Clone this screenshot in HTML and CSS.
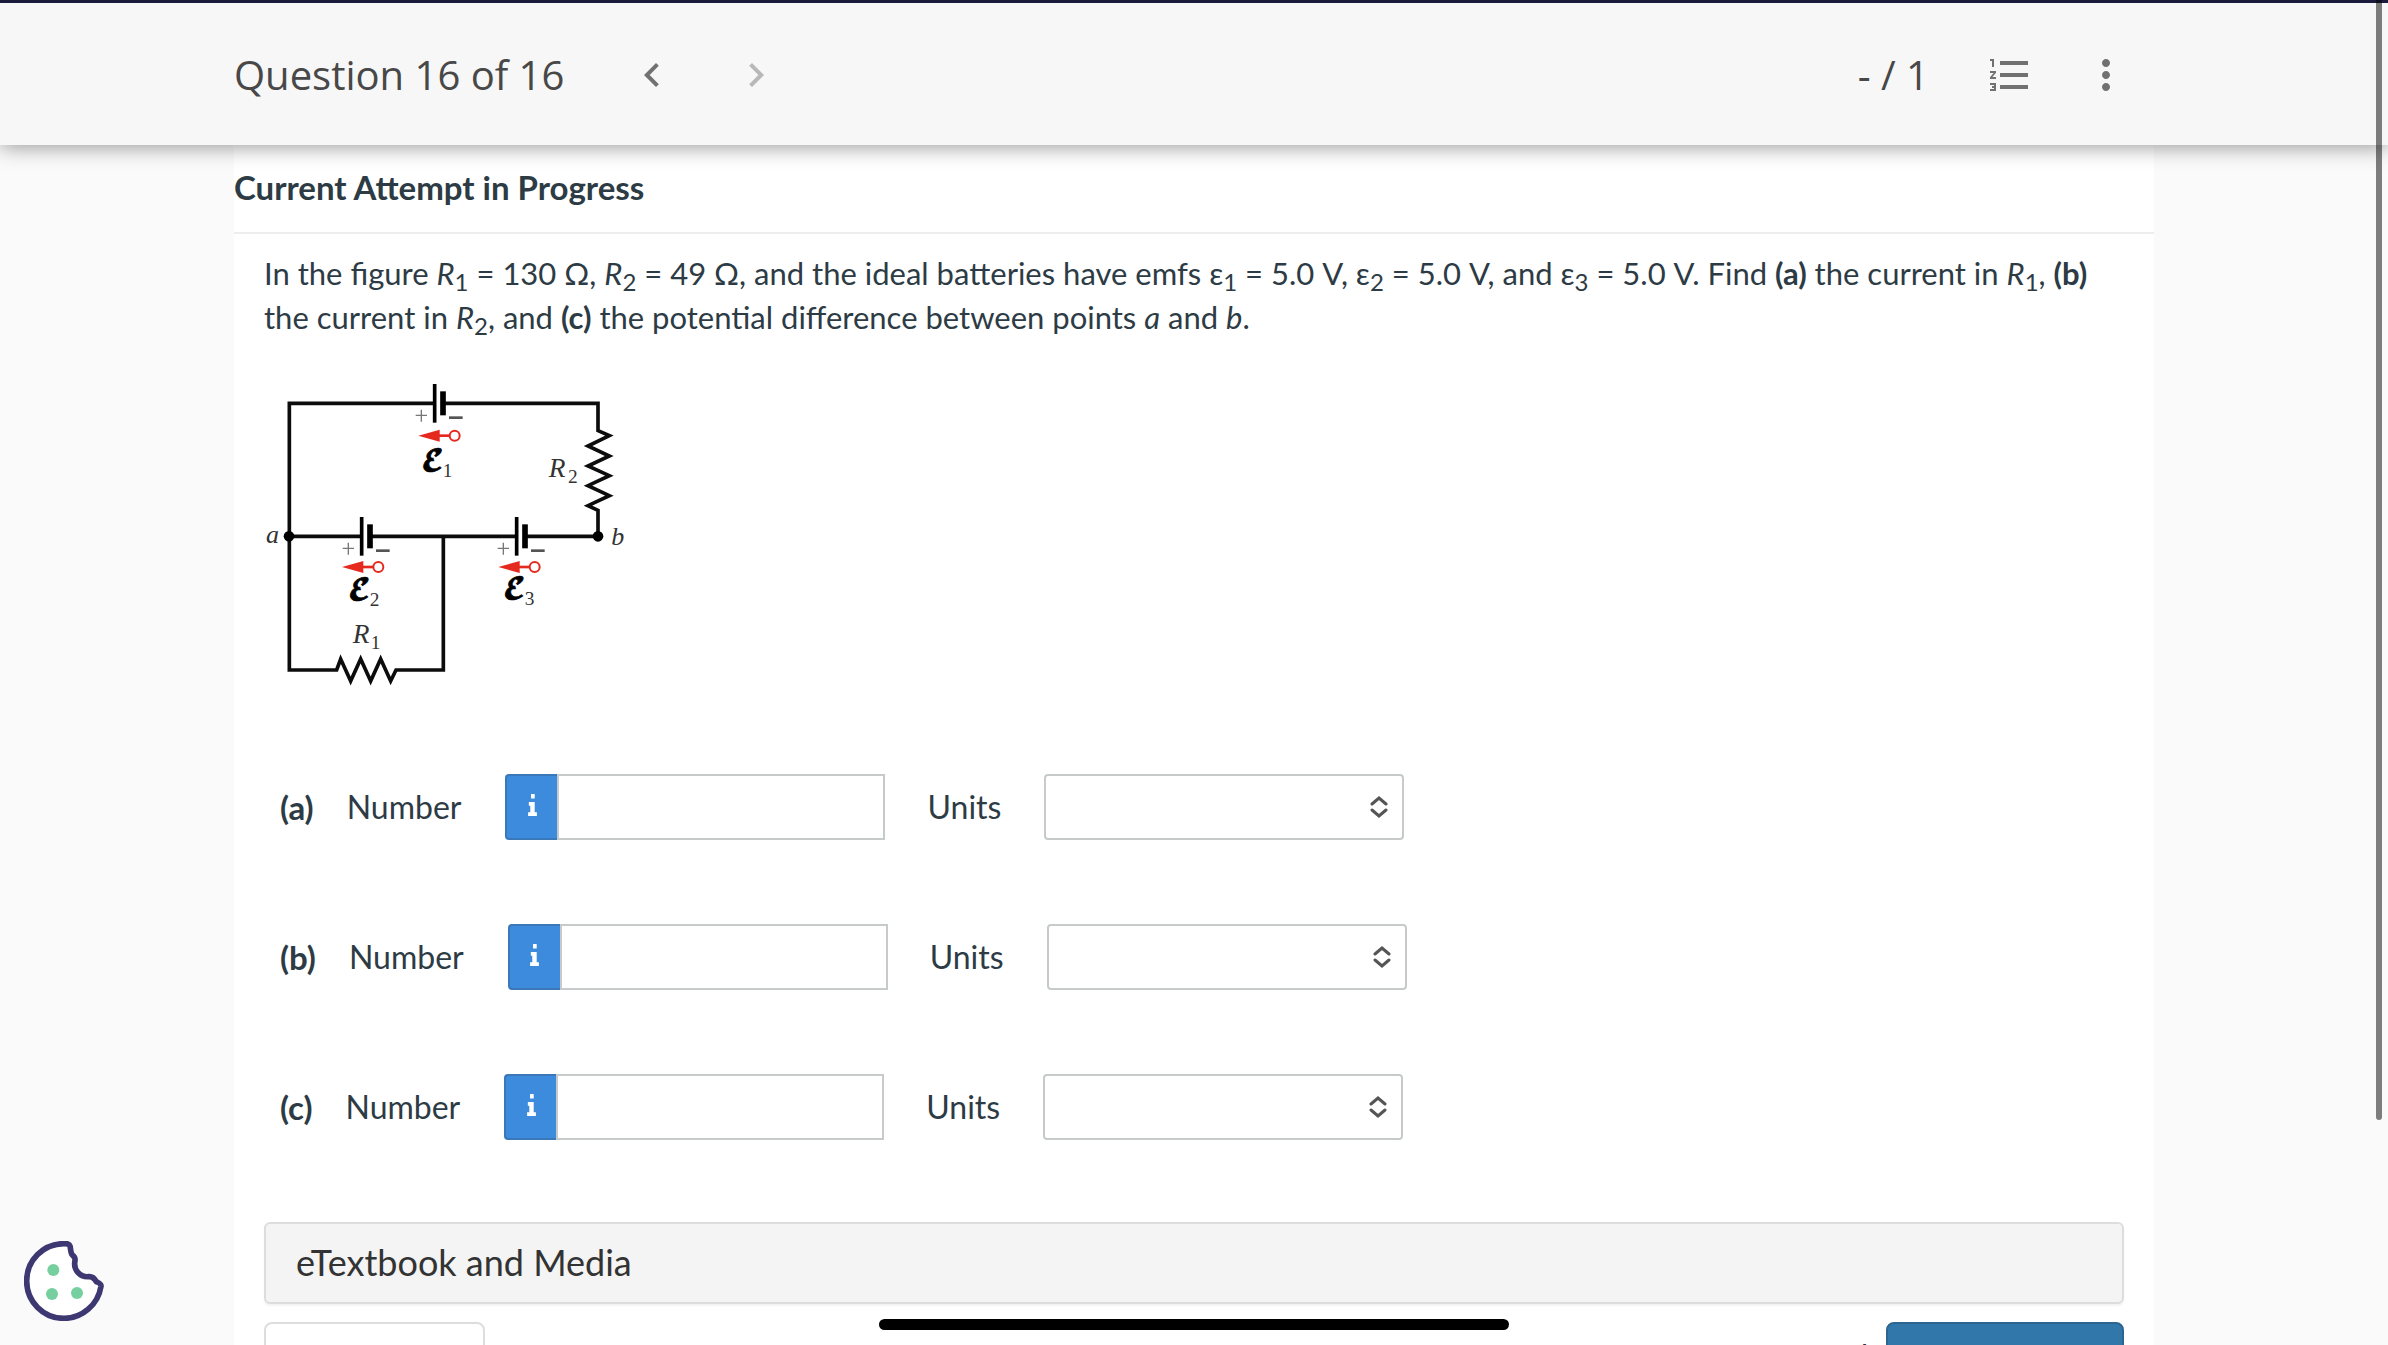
FILE: index.html
```html
<!DOCTYPE html>
<html lang="en">
<head>
<meta charset="utf-8">
<meta name="viewport" content="width=device-width, initial-scale=1">
<title>Question 16 of 16</title>
<link rel="stylesheet" href="styles.css">
</head>
<body>
<div class="app">
  <header class="topbar">
    <div class="topbar-inner">
      <h1 class="topbar-title">Question 16 of 16</h1>
      <nav class="pager">
        <button class="icon-button" type="button" aria-label="Previous question">
          <svg viewBox="0 0 24 24"><path d="M15.41 7.41 14 6l-6 6 6 6 1.41-1.41L10.83 12z"/></svg>
        </button>
        <button class="icon-button" type="button" aria-label="Next question" disabled>
          <svg viewBox="0 0 24 24"><path d="M10 6 8.59 7.41 13.17 12l-4.58 4.59L10 18l6-6z"/></svg>
        </button>
      </nav>
      <div class="score">- / 1</div>
      <div class="actions">
        <button class="icon-button" type="button" aria-label="Question list">
          <svg viewBox="0 0 24 24"><path d="M2 17h2v.5H3v1h1v.5H2v1h3v-4H2v1zm1-9h1V4H2v1h1v3zm-1 3h1.800L2 13.100v.900h3v-1H3.200L5 10.900V10H2v1zm5-6v2h14V5H7zm0 14h14v-2H7v2zm0-6h14v-2H7v2z"/></svg>
        </button>
        <button class="icon-button" type="button" aria-label="More options">
          <svg viewBox="0 0 24 24"><path d="M12 8c1.100 0 2-.900 2-2s-.900-2-2-2-2 .900-2 2 .900 2 2 2zm0 2c-1.100 0-2 .900-2 2s.900 2 2 2 2-.900 2-2-.900-2-2-2zm0 6c-1.100 0-2 .900-2 2s.900 2 2 2 2-.900 2-2-.900-2-2-2z"/></svg>
        </button>
      </div>
    </div>
  </header>

  <main class="sheet">
    <h2 class="attempt">Current Attempt in Progress</h2>
    <form class="question">
      <p class="prompt">In the figure <i>R</i><sub>1</sub> = 130 Ω, <i>R</i><sub>2</sub> = 49 Ω, and the ideal batteries have emfs ε<sub>1</sub> = 5.0 V, ε<sub>2</sub> = 5.0 V, and ε<sub>3</sub> = 5.0 V. Find <b>(a)</b> the current in <i>R</i><sub>1</sub>, <b>(b)</b> the current in <i>R</i><sub>2</sub>, and <b>(c)</b> the potential difference between points <i>a</i> and <i>b</i>.</p>

      <svg class="circuit" viewBox="42 42 1080 930" role="img" aria-label="Circuit diagram">
        <defs>
          <g id="cell">
            <path d="M0-58V58" stroke="#000" stroke-width="11"/>
            <path d="M25-36V36" stroke="#000" stroke-width="17"/>
            <path d="M-57 36h34M-40 19v36" stroke="#777" stroke-width="4"/>
            <path d="M43 43h41" stroke="#555" stroke-width="8"/>
          </g>
          <g id="emf">
            <path d="M0 0 64-18V18z" fill="#e6291f"/>
            <path d="M60 0h34" stroke="#e6291f" stroke-width="8"/>
            <circle cx="109" cy="0" r="15" fill="#fff" stroke="#e6291f" stroke-width="6"/>
          </g>
        </defs>
        <g fill="none" stroke="#0c0c0c" stroke-width="11">
          <path d="M550 100H118V900H260l12-33 30 66 30-66 30 66 30-66 30 66 16-33H580V499"/>
          <path d="M580 100H1044V182l34 15-64 31 64 30-64 30 64 29-64 30 64 30-64 30 30 14V499"/>
          <path d="M118 499H334M359 499H799M824 499H1044"/>
        </g>
        <circle cx="117" cy="499" r="16"/><circle cx="1044" cy="499" r="16"/>
        <use href="#cell" x="554" y="100"/>
        <use href="#cell" x="335" y="499"/>
        <use href="#cell" x="800" y="499"/>
        <use href="#emf" x="505" y="197"/>
        <use href="#emf" x="276" y="591"/>
        <use href="#emf" x="745" y="591"/>
        <g class="circuit-emf">
          <text x="514" y="300">𝓔</text>
          <text x="294" y="686">𝓔</text>
          <text x="759" y="684">𝓔</text>
        </g>
        <g class="circuit-text">
          <text x="578" y="322" font-size="58">1</text>
          <text x="359" y="709" font-size="58">2</text>
          <text x="824" y="705" font-size="58">3</text>
          <text x="896" y="322" font-size="82" font-style="italic">R</text>
          <text x="954" y="340" font-size="58">2</text>
          <text x="308" y="820" font-size="82" font-style="italic">R</text>
          <text x="362" y="838" font-size="58">1</text>
          <text x="48" y="518" font-size="78" font-style="italic">a</text>
          <text x="1084" y="526" font-size="78" font-style="italic">b</text>
        </g>
      </svg>

      <div class="answers">
        <div class="answer">
          <b class="part">(a)</b>
          <label class="field-label" for="num-a">Number</label>
          <div class="number">
            <button class="info" type="button" aria-label="Input help"><svg viewBox="0 0 12 30"><path d="M4 0h5v6H4zM1 11h8v14h3v5H0v-5h3v-9H1z"/></svg></button>
            <input id="num-a" type="text">
          </div>
          <label class="field-label" for="unit-a">Units</label>
          <div class="unit">
            <select id="unit-a"><option></option></select>
            <svg viewBox="0 0 18 22"><path d="M2 8l7-6 7 6M2 14l7 6 7-6"/></svg>
          </div>
        </div>
        <div class="answer">
          <b class="part">(b)</b>
          <label class="field-label" for="num-b">Number</label>
          <div class="number">
            <button class="info" type="button" aria-label="Input help"><svg viewBox="0 0 12 30"><path d="M4 0h5v6H4zM1 11h8v14h3v5H0v-5h3v-9H1z"/></svg></button>
            <input id="num-b" type="text">
          </div>
          <label class="field-label" for="unit-b">Units</label>
          <div class="unit">
            <select id="unit-b"><option></option></select>
            <svg viewBox="0 0 18 22"><path d="M2 8l7-6 7 6M2 14l7 6 7-6"/></svg>
          </div>
        </div>
        <div class="answer">
          <b class="part">(c)</b>
          <label class="field-label" for="num-c">Number</label>
          <div class="number">
            <button class="info" type="button" aria-label="Input help"><svg viewBox="0 0 12 30"><path d="M4 0h5v6H4zM1 11h8v14h3v5H0v-5h3v-9H1z"/></svg></button>
            <input id="num-c" type="text">
          </div>
          <label class="field-label" for="unit-c">Units</label>
          <div class="unit">
            <select id="unit-c"><option></option></select>
            <svg viewBox="0 0 18 22"><path d="M2 8l7-6 7 6M2 14l7 6 7-6"/></svg>
          </div>
        </div>
      </div>

      <button class="media" type="button">eTextbook and Media</button>

      <div class="footer">
        <button class="save" type="button">Save for Later</button>
        <span class="attempts">Attempts: 0 of 1 used</span>
        <button class="submit" type="submit">Submit Answer</button>
      </div>
    </form>
  </main>

  <button class="cookie" type="button" aria-label="Cookie preferences">
    <svg viewBox="0 0 240 240">
      <path d="M120 8C58 8 8 58 8 120s50 112 112 112c55 0 102-41 111-96 1-8-8-11-14-14-5-9-12-16-23-15-26 2-47-20-41-48 1-8-1-12-7-16-7-6-5-16-8-28-2-7-9-7-18-7z" fill="#fff" stroke="#3d3872" stroke-width="17" stroke-linejoin="round"/>
      <g fill="#76cf9f"><circle cx="88" cy="87" r="18"/><circle cx="84" cy="159" r="18"/><circle cx="159" cy="156" r="18"/></g>
    </svg>
  </button>
  <div class="scroll-thumb"></div>
  <div class="home-bar"></div>
</div>
</body>
</html>
```
FILE: styles.css
```css
* { box-sizing: border-box; }

body {
  margin: 0;
  background: #fafafa;
  color: #2d3b45;
  font: 32px/44px Lato, "Open Sans", sans-serif;
}

button, input, select { font: inherit; color: inherit; }
button { padding: 0; cursor: pointer; }

.app { height: 100vh; overflow: hidden; }

/* Top bar */
.topbar {
  position: relative;
  z-index: 1;
  border-top: 3px solid #1b1c3d;
  background: #f7f7f7;
  box-shadow: 0 2px 20px rgba(0, 0, 0, .4);
}
.topbar-inner {
  display: flex;
  align-items: center;
  max-width: 1920px;
  height: 142px;
  margin: 0 auto;
  padding: 2px 24px 0 0;
  color: #484848;
  font: 40px/56px "Open Sans", sans-serif;
}
.topbar-title { margin: 0; font: inherit; }
.pager { display: flex; gap: 56px; margin-left: 64px; }
.score { margin-left: auto; }
.actions { display: flex; gap: 48px; margin-left: 57px; }
.icon-button { width: 48px; height: 48px; border: 0; background: none; }
.icon-button svg { display: block; width: 48px; height: 48px; fill: #717171; }
.icon-button:disabled svg { fill: #b8b8b8; }

/* Question sheet */
.sheet { max-width: 1920px; margin: 0 auto; background: #fff; }
.attempt {
  margin: 0;
  padding: 20px 0 23px;
  border-bottom: 2px solid #eee;
  font-size: 33px;
  font-weight: 700;
}
.question { padding: 17px 30px 40px; }
.prompt { margin: 0 0 45px; font-size: 31px; }
sub { position: relative; bottom: -6px; font-size: 24px; line-height: 0; vertical-align: baseline; }
.circuit { display: block; width: 360px; height: 310px; }
.circuit-text { fill: #333; font-family: "Liberation Serif", serif; }
.circuit-emf { font: 84px "DejaVu Math TeX Gyre", "DejaVu Serif", serif; stroke: #000; stroke-width: 2; }

/* Answer rows */
.answers { display: flex; flex-direction: column; gap: 84px; margin: 80px 0 82px; padding-left: 16px; }
.answer { display: flex; align-items: center; }
.part { margin-right: 33px; font-size: 33px; }
.number { display: flex; width: 380px; height: 66px; margin: 0 42px 0 44px; }
.info {
  display: flex;
  align-items: center;
  justify-content: center;
  width: 52px;
  border: 2px solid #3a78ba;
  border-right: 0;
  border-radius: 4px 0 0 4px;
  background: #3d8bdc;
}
.info svg { width: 11px; height: 22px; margin-bottom: 4px; fill: #fff; }
.number input { flex: 1; min-width: 0; padding: 0 12px; border: 2px solid #c7cacb; border-radius: 0; background: #fff; }
.unit { position: relative; width: 360px; height: 66px; margin-left: 43px; }
.unit select { width: 100%; height: 100%; padding: 0 56px 0 12px; border: 2px solid #c7cacb; border-radius: 4px; background: #fff; appearance: none; }
.unit svg {
  position: absolute;
  top: 22px;
  right: 16px;
  width: 18px;
  height: 22px;
  fill: none;
  stroke: #555;
  stroke-width: 3;
  stroke-linecap: round;
  pointer-events: none;
}

/* Resources and submission */
.media {
  display: block;
  width: 100%;
  height: 82px;
  padding: 0 30px 2px;
  border: 2px solid #ddd;
  border-radius: 6px;
  background: #f4f4f4;
  box-shadow: 0 2px 2px rgba(0, 0, 0, .05);
  color: #333;
  font-size: 36px;
  text-align: left;
}
.footer { display: flex; align-items: flex-start; margin-top: 18px; color: #333; font-size: 31px; }
.footer button { height: 80px; border-radius: 8px; font-size: 28px; }
.save { width: 221px; border: 2px solid #ddd; background: #fff; }
.attempts { margin: 11px 18px 0 auto; }
.submit { width: 238px; border: 2px solid #2b6590; background: #3277a9; color: #fff; }

/* Overlays */
.cookie { position: fixed; bottom: 24px; left: 24px; z-index: 2; width: 80px; height: 80px; border: 0; background: none; }
.cookie svg { display: block; width: 80px; height: 80px; }
.scroll-thumb { position: fixed; top: 0; right: 6px; z-index: 3; width: 6px; height: 1120px; border-radius: 0 0 3px 3px; background: rgba(0, 0, 0, .5); }
.home-bar { position: fixed; bottom: 15px; left: 50%; z-index: 3; width: 630px; height: 11px; margin-left: -315px; border-radius: 6px; background: #000; }
```
